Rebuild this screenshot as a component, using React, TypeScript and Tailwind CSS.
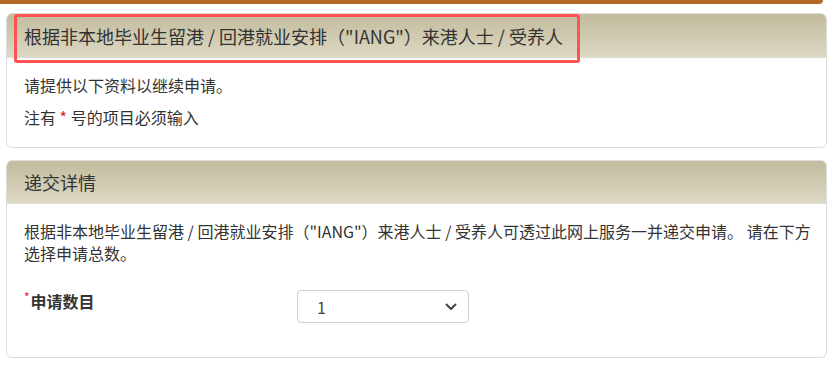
export default function App() {
  const font = { fontFamily: '"Noto Sans CJK SC", "Noto Sans", sans-serif' };

  return (
    <div className="w-[828px] h-[369px] overflow-hidden bg-white text-[#333]" style={font}>
      {/* top brown strip */}
      <div className="h-[4px] w-[823px] bg-[#b46a27] rounded-br-[5px]" />

      <div className="ml-[6px] mr-[1px] mt-[9px] flex flex-col gap-[12px]">
        {/* ── card 1 ── */}
        <section className="border border-[#dcdcdc] rounded-[6px] overflow-hidden">
          <div className="relative h-[44px] flex items-center px-[17px] bg-gradient-to-b from-[#c2bb9d] to-[#ddd8c3] border-b border-[#e2dfd2]">
            <h1 className="text-[18px] leading-[22px] font-normal">
              根据非本地毕业生留港 / 回港就业安排（"IANG"）来港人士 / 受养人
            </h1>
            <div className="absolute left-[7px] top-[0px] w-[566px] h-[49px] border-[3px] border-[#ff5252] rounded-[3px]" />
          </div>
          <div className="px-[17px] pt-[16px] pb-[19px] text-[16px] leading-[22px] flex flex-col gap-[10px]">
            <p>请提供以下资料以继续申请。</p>
            <p>
              注有 <span className="text-[#e0201e]">*</span> 号的项目必须输入
            </p>
          </div>
        </section>

        {/* ── card 2 ── */}
        <section className="border border-[#dcdcdc] rounded-[6px] overflow-hidden">
          <div className="h-[43px] flex items-center px-[17px] bg-gradient-to-b from-[#c2bb9d] to-[#ddd8c3] border-b border-[#e2dfd2]">
            <h2 className="text-[18px] leading-[22px] font-normal">递交详情</h2>
          </div>
          <div className="px-[17px] pt-[16px] pb-[34px] text-[16px] leading-[22px]">
            <p className="mr-[-10px]">
              根据非本地毕业生留港 / 回港就业安排（"IANG"）来港人士 / 受养人可透过此网上服务一并递交申请。 请在下方选择申请总数。
            </p>
            <div className="mt-[26px] flex items-start">
              <label className="w-[273px] font-bold leading-[22px] flex items-start">
                <span className="text-[#e0201e] text-[12px] leading-[14px] font-normal mr-[1px]">*</span>
                申请数目
              </label>
              <div className="relative w-[172px] h-[33px] border border-[#cfcfcf] rounded-[4px] bg-white flex items-center pl-[19px]">
                <span className="text-[16px] text-[#444]">1</span>
                <svg
                  className="absolute right-[11px] top-[12px]"
                  width="12"
                  height="8"
                  viewBox="0 0 12 8"
                  fill="none"
                  stroke="#444"
                  strokeWidth="2"
                  strokeLinecap="round"
                  strokeLinejoin="round"
                >
                  <path d="M1.5 1.5 6 6l4.5-4.5" />
                </svg>
              </div>
            </div>
          </div>
        </section>
      </div>
    </div>
  );
}
